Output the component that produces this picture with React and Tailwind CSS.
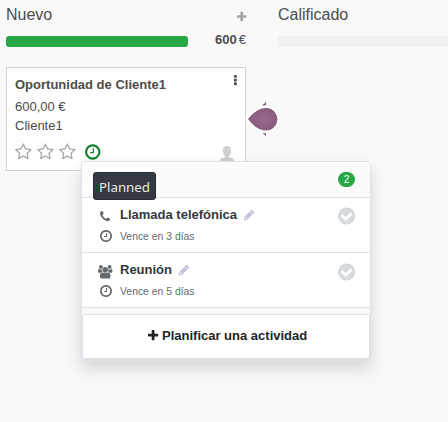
import React from "react";

const GLYPHS = {
  clock: [1536, "M896 544v448q0 14-9 23t-23 9h-320q-14 0-23-9t-9-23v-64q0-14 9-23t23-9h224v-352q0-14 9-23t23-9h64q14 0 23 9t9 23zm416 352q0-148-73-273t-198-198-273-73-273 73-198 198-73 273 73 273 198 198 273 73 273-73 198-198 73-273zm224 0q0 209-103 385.5t-279.5 279.5-385.5 103-385.5-103-279.5-279.5-103-385.5 103-385.5 279.5-279.5 385.5-103 385.5 103 279.5 279.5 103 385.5z"],
  star: [1664, "M1137 1004l306-297-422-62-189-382-189 382-422 62 306 297-73 421 378-199 377 199zm527-357q0 22-26 48l-363 354 86 500q1 7 1 20 0 50-41 50-19 0-40-12l-449-236-449 236q-22 12-40 12-21 0-31.5-14.5t-10.5-35.5q0-6 2-20l86-500-364-354q-25-27-25-48 0-37 56-46l502-73 225-455q19-41 49-41t49 41l225 455 502 73q56 9 56 46z"],
  phone: [1408, "M1408 1240q0 27-10 70.5t-21 68.5q-21 50-122 106-94 51-186 51-27 0-52.5-3.5t-57.5-12.5-47.5-14.5-55.5-20.5-49-18q-98-35-175-83-128-79-264.5-215.5t-215.5-264.5q-48-77-83-175-3-9-18-49t-20.5-55.5-14.5-47.5-12.5-57.5-3.5-52.5q0-92 51-186 56-101 106-122 25-11 68.5-21t70.5-10q14 0 21 3 18 6 53 76 11 19 30 54t35 63.5 31 53.5q3 4 17.5 25t21.5 35.5 7 28.5q0 20-28.5 50t-62 55-62 53-28.5 46q0 9 5 22.5t8.5 20.5 14 24 11.5 19q76 137 174 235t235 174q2 1 19 11.5t24 14 20.5 8.5 22.5 5q18 0 46-28.5t53-62 55-62 50-28.5q14 0 28.5 7t35.5 21.5 25 17.5q25 15 53.5 31t63.5 35 54 30q70 35 76 53 3 7 3 21z"],
  users: [1920, "M593 896q-162 5-265 128h-134q-82 0-138-40.5t-56-118.5q0-353 124-353 6 0 43.5 21t97.5 42.5 119 21.5q67 0 133-23-5 37-5 66 0 139 81 256zm1071 637q0 120-73 189.5t-194 69.5h-874q-121 0-194-69.5t-73-189.5q0-53 3.5-103.5t14-109 26.5-108.5 43-97.5 62-81 85.5-53.5 111.5-20q10 0 43 21.5t73 48 107 48 135 21.5 135-21.5 107-48 73-48 43-21.5q61 0 111.5 20t85.5 53.5 62 81 43 97.5 26.5 108.5 14 109 3.5 103.5zm-1024-1277q0 106-75 181t-181 75-181-75-75-181 75-181 181-75 181 75 75 181zm704 384q0 159-112.5 271.5t-271.5 112.5-271.5-112.5-112.5-271.5 112.5-271.5 271.5-112.5 271.5 112.5 112.5 271.5zm576 225q0 78-56 118.5t-138 40.5h-134q-103-123-265-128 81-117 81-256 0-29-5-66 66 23 133 23 59 0 119-21.5t97.5-42.5 43.5-21q124 0 124 353zm-128-609q0 106-75 181t-181 75-181-75-75-181 75-181 181-75 181 75 75 181z"],
  pencil: [1536, "M363 1536l91-91-235-235-91 91v107h128v128h107zM832 416l416 416-832 832h-416v-416zm683 96q0 53-37 90l-166 166-416-416 166-165q36-38 90-38 53 0 91 38l235 234q37 39 37 91z"],
  check: [1536, "M1284 734q0-28-18-46l-91-90q-19-19-45-19t-45 19l-408 407-226-226q-19-19-45-19t-45 19l-91 90q-18 18-18 46 0 27 18 45l362 362q19 19 45 19 27 0 46-19l543-543q18-18 18-45zm252 162q0 209-103 385.5t-279.5 279.5-385.5 103-385.5-103-279.5-279.5-103-385.5 103-385.5 279.5-279.5 385.5-103 385.5 103 279.5 279.5 103 385.5z"],
  plus: [1408, "M1408 736v192q0 40-28 68t-68 28h-416v416q0 40-28 68t-68 28h-192q-40 0-68-28t-28-68v-416h-416q-40 0-68-28t-28-68v-192q0-40 28-68t68-28h416v-416q0-40 28-68t68-28h192q40 0 68 28t28 68v416h416q40 0 68 28t28 68z"],
  dots: [384, "M384 1248v192q0 40-28 68t-68 28h-192q-40 0-68-28t-28-68v-192q0-40 28-68t68-28h192q40 0 68 28t28 68zm0-512v192q0 40-28 68t-68 28h-192q-40 0-68-28t-28-68v-192q0-40 28-68t68-28h192q40 0 68 28t28 68zm0-512v192q0 40-28 68t-68 28h-192q-40 0-68-28t-28-68v-192q0-40 28-68t68-28h192q40 0 68 28t28 68z"],
};

function Glyph({ name, className }) {
  const [width, d] = GLYPHS[name];
  return (
    <svg viewBox={`0 0 ${width} 1792`} fill="currentColor" fillRule={name === "pencil" ? "evenodd" : "nonzero"} className={`w-auto shrink-0 overflow-visible ${className}`}>
      <path d={d} />
    </svg>
  );
}

function Activity({ icon, iconClass, checkClass, title, due }) {
  return (
    <li className="flex h-[55px] border-b border-[#dee2e6] bg-white pr-[15px]">
      <div className="flex w-[38px] flex-col items-center pl-[9px] text-[#666a6d]">
        <span className="flex h-[34px] items-center pt-[3px]">
          <Glyph name={icon} className={iconClass} />
        </span>
        <Glyph name="clock" className="-mt-[3.5px] h-[14px]" />
      </div>
      <div className="flex-1 pt-2">
        <div className="flex h-[18px] items-center text-[13px] font-bold text-[#34383c]">
          <span>{title}</span>
          <Glyph name="pencil" className="ml-[7px] h-[12px] text-[#c5bfd9]" />
        </div>
        <div className="mt-[5px] text-[10.4px] leading-4 text-[#666a6d]">{due}</div>
      </div>
      <Glyph name="check" className={`h-[20px] text-[#d5dadf] ${checkClass}`} />
    </li>
  );
}

export default function App() {
  return (
    <div className="relative flex h-[422px] w-[448px] overflow-hidden bg-[#f9f9f9] font-['Liberation_Sans',Arial,sans-serif] text-[13px] text-[#4c4c4c]">
      <section className="w-[272px] pl-[6px]">
        <header className="flex h-[30px] w-[240px] items-center justify-between">
          <h2 className="text-[16px] leading-[24px]">Nuevo</h2>
          <Glyph name="plus" className="mt-[3px] h-[12px] text-[#a3a3a3]" />
        </header>
        <div className="flex h-[22px] w-[240px] items-center justify-between">
          <div className="h-[11px] w-[182px] rounded-[3px] bg-[#28a745]" />
          <div className="-mt-[3px] text-[13px]">
            <b>600</b><span className="ml-[2px]">€</span>
          </div>
        </div>
        <article className="mt-[15px] flex h-[104px] w-[240px] flex-col border border-[#ced4da] bg-white px-2">
          <div className="mt-[7px] flex h-[20px] items-center justify-between">
            <h3 className="text-[13px] font-bold">Oportunidad de Cliente1</h3>
            <Glyph name="dots" className="-mt-[9px] h-[13px]" />
          </div>
          <div className="mt-[2px] leading-[19px]">600,00 €</div>
          <div className="leading-[19px]">Cliente1</div>
          <div className="mt-[7px] flex h-[20px] items-center">
            <div className="flex gap-[5.2px] text-[#a8a8a8]">
              <Glyph name="star" className="h-[18px]" />
              <Glyph name="star" className="h-[18px]" />
              <Glyph name="star" className="h-[18px]" />
            </div>
            <Glyph name="clock" className="ml-[9.3px] h-[18px] text-[#188532]" />
            <svg viewBox="0 0 16 18" className="ml-auto mr-[2px] mt-[4px] h-[18px] w-[16px]" fill="#cfcfcf">
              <path d="M8 1C5.3 1 4 2.8 4 5.3c0 2.6.7 4.5 2 5.8v1.2c-2.9.6-5 1.2-5 3.4V18h14v-2.3c0-2.2-2.1-2.8-5-3.4v-1.2c1.3-1.3 2-3.2 2-5.8C12 2.8 10.7 1 8 1z" />
            </svg>
          </div>
        </article>
      </section>
      <section className="w-[176px] pl-[6px]">
        <header className="flex h-[30px] items-center">
          <h2 className="text-[16px] leading-[24px]">Calificado</h2>
        </header>
        <div className="mt-[6px] h-[11px] rounded-l-[3px] bg-[#f0f1f3]" />
      </section>

      <svg className="absolute left-[244px] top-[98px] h-[42px] w-[38px]" viewBox="0 0 38 42">
        <defs>
          <radialGradient id="drop" cx=".55" cy=".5" r=".55">
            <stop offset="0" stopColor="#986a8c" />
            <stop offset="1" stopColor="#875a7b" />
          </radialGradient>
        </defs>
        <path d="M18 7.5 22 4v4zM18 34.500 22 38v-4z" fill="#875a7b" />
        <path d="M4 21C10 14 15 10 22 10a11 11 0 0 1 0 22.500C15 32.500 10 28.500 4 21z" fill="url(#drop)" stroke="white" strokeWidth="5.5" strokeLinejoin="round" paintOrder="stroke" />
      </svg>

      <div className="absolute left-[81px] top-[161px] flex h-[200px] w-[290px] flex-col rounded-[3px] border border-[#dee2e6] bg-[#f8f9fa] shadow-[0_8px_16px_rgba(0,0,0,0.15)]">
        <div className="flex h-[36px] items-center justify-end border-b border-[#dee2e6] bg-[#fcfcfc] pr-[15px]">
          <span className="flex h-[15px] w-[17px] items-center justify-center rounded-full bg-[#28a745] pb-px text-[10px] text-white">2</span>
        </div>
        <ul>
          <Activity icon="phone" iconClass="h-[13px]" checkClass="mt-[8px]" title="Llamada telefónica" due="Vence en 3 días" />
          <Activity icon="users" iconClass="h-[13.5px]" checkClass="mt-[9px]" title="Reunión" due="Vence en 5 días" />
        </ul>
        <button className="mt-[6px] flex flex-1 items-center justify-center gap-[4px] rounded-[3px] border border-b-2 border-[#dee2e6] bg-white pb-[2px] pl-[3px] text-[13px] font-bold text-[#212529]">
          <Glyph name="plus" className="h-[13px]" />
          <span>Planificar una actividad</span>
        </button>
      </div>

      <div className="absolute left-[93px] top-[172px] flex h-[28px] w-[63px] items-center justify-center rounded-[3px] border border-[#292c2f] bg-[#343a40] pt-[3px] font-['Noto_Sans',sans-serif] text-[13.3px] text-[#e9e9e9]">
        Planned
      </div>
    </div>
  );
}
